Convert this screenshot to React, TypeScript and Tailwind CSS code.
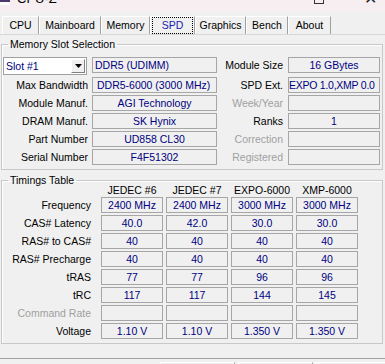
import React from "react";

const NAVY = "text-[#000080]";

function Field({
  children,
  left = false,
  w,
  extra = "",
}: {
  children?: React.ReactNode;
  left?: boolean;
  w?: string;
  extra?: string;
}) {
  return (
    <div
      className={`h-[16px] border border-[#a6a6a6] bg-[#f0f0f0] leading-[14px] whitespace-nowrap overflow-hidden ${NAVY} ${
        left ? "text-left" : "text-center"
      } ${w ?? ""} ${extra}`}
    >
      {children}
    </div>
  );
}

function Label({
  children,
  dim = false,
  pr,
}: {
  children: React.ReactNode;
  dim?: boolean;
  pr: string;
}) {
  return (
    <div
      className={`h-[16px] leading-[16px] text-right whitespace-nowrap ${pr} ${
        dim ? "text-[#a0a0a0]" : "text-black"
      }`}
    >
      {children}
    </div>
  );
}

const tabs: { name: string; w: string; sel?: boolean }[] = [
  { name: "CPU", w: "w-[37px]" },
  { name: "Mainboard", w: "w-[62px]" },
  { name: "Memory", w: "w-[49px]" },
  { name: "SPD", w: "w-[45px]", sel: true },
  { name: "Graphics", w: "w-[51px]" },
  { name: "Bench", w: "w-[42px]" },
  { name: "About", w: "w-[43px]" },
];

const slotRows: [string, string, boolean, string, string, boolean, boolean][] = [
  ["Max Bandwidth", "DDR5-6000 (3000 MHz)", true, "SPD Ext.", "EXPO 1.0,XMP 0.0", false, true],
  ["Module Manuf.", "AGI Technology", false, "Week/Year", "", true, false],
  ["DRAM Manuf.", "SK Hynix", false, "Ranks", "1", false, false],
  ["Part Number", "UD858 CL30", false, "Correction", "", true, false],
  ["Serial Number", "F4F51302", false, "Registered", "", true, false],
];

const timingRows: [string, string[], boolean][] = [
  ["Frequency", ["2400 MHz", "2400 MHz", "3000 MHz", "3000 MHz"], false],
  ["CAS# Latency", ["40.0", "42.0", "30.0", "30.0"], false],
  ["RAS# to CAS#", ["40", "40", "40", "40"], false],
  ["RAS# Precharge", ["40", "40", "40", "40"], false],
  ["tRAS", ["77", "77", "96", "96"], false],
  ["tRC", ["117", "117", "144", "145"], false],
  ["Command Rate", ["", "", "", ""], true],
  ["Voltage", ["1.10 V", "1.10 V", "1.350 V", "1.350 V"], false],
];

export default function App() {
  return (
    <div className="w-[385px] h-[364px] overflow-hidden bg-[#f0f0f0] font-['Liberation_Sans',Arial,sans-serif] text-[10.5px] text-black">
      {/* title bar (cut off at the top of the picture) */}
      <div className="h-[12px] overflow-hidden bg-[#f7eef1]">
        <div className="-mt-[9px] h-[16px] flex items-center">
          <div className="w-[10px] h-[12px] bg-[#4b3a6b] border-b-[3px] border-white" />
          <div className="ml-[7px] text-[13px] leading-[16px] text-black">CPU-Z</div>
          <div className="ml-auto mr-[40px] w-[10px] h-[10px] border border-[#333]" />
          <div className="mr-[8px] text-[16px] leading-[16px] text-[#222]">✕</div>
        </div>
      </div>

      {/* tabs */}
      <div className="h-[22px] pt-[4px] pl-[2px] flex">
        {tabs.map((t) => (
          <div
            key={t.name}
            className={`${t.w} h-[18px] flex items-center justify-center border-l border-white border-r border-r-[#a0a0a0] border-t border-t-white`}
          >
            {t.sel ? (
              <div className="w-[41px] h-[17px] border border-dotted border-black flex items-center justify-center text-[#1a1ab0]">
                {t.name}
              </div>
            ) : (
              <span>{t.name}</span>
            )}
          </div>
        ))}
      </div>

      {/* page frame */}
      <div className="h-[325px] border-t border-t-[#d8d8d8] border-b border-b-[#a0a0a0]">
        {/* Memory Slot Selection */}
        <fieldset className="mt-[3px] ml-[1px] w-[382px] border border-[#c8c8c8] pl-[1px] pt-[7px] pb-[4px] shadow-[inset_1px_1px_0_#fff]">
          <legend className="ml-[5px] px-[2px] leading-[12px]">Memory Slot Selection</legend>
          <div className="flex flex-col gap-[2px]">
            <div className="flex h-[18px] items-start">
              <div className="w-[89px]">
                <div className="w-[84px] h-[18px] bg-white border border-[#a0a0a0] flex items-center">
                  <span className={`pl-[2px] ${NAVY} leading-[16px]`}>Slot #1</span>
                  <div className="ml-auto mr-[1px] w-[14px] h-[14px] bg-[#f0f0f0] border border-t-white border-l-white border-b-[#808080] border-r-[#808080] flex items-center justify-center">
                    <svg width="7" height="4" viewBox="0 0 7 4">
                      <path d="M0 0h7L3.5 4z" fill="#000" />
                    </svg>
                  </div>
                </div>
              </div>
              <Field left w="w-[125px]" extra="pl-[2px]">
                DDR5 (UDIMM)
              </Field>
              <div className="w-[71px]">
                <Label pr="pr-[5px]">Module Size</Label>
              </div>
              <Field w="w-[92px]">16 GBytes</Field>
            </div>
            {slotRows.map(([l1, v1, left1, l2, v2, dim2, left2]) => (
              <div key={l1} className="flex h-[16px]">
                <div className="w-[89px]">
                  <Label pr="pr-[4px]">{l1}</Label>
                </div>
                <Field left={left1} w="w-[125px]" extra={left1 ? "pl-[4px]" : ""}>
                  {v1}
                </Field>
                <div className="w-[71px]">
                  <Label pr="pr-[5px]" dim={dim2}>
                    {l2}
                  </Label>
                </div>
                <Field
                  left={left2}
                  w="w-[92px]"
                  extra={left2 ? "pl-0 tracking-[-0.25px]" : ""}
                >
                  {v2}
                </Field>
              </div>
            ))}
          </div>
        </fieldset>

        {/* Timings Table */}
        <fieldset className="mt-[4px] ml-[1px] w-[382px] border border-[#c8c8c8] pl-[1px] pb-[4px] shadow-[inset_1px_1px_0_#fff]">
          <legend className="ml-[5px] px-[2px] leading-[12px]">Timings Table</legend>
          <div className="grid grid-cols-[95px_62px_62px_62px_62px] gap-x-[3px] gap-y-[2px]">
            <div className="h-[9px]" />
            {["JEDEC #6", "JEDEC #7", "EXPO-6000", "XMP-6000"].map((h) => (
              <div key={h} className="h-[9px] leading-[8px] text-center whitespace-nowrap">
                {h}
              </div>
            ))}
            {timingRows.map(([label, vals, dim]) => (
              <React.Fragment key={label}>
                <Label pr="pr-[7px]" dim={dim}>
                  {label}
                </Label>
                {vals.map((v, i) => (
                  <Field key={i}>{v}</Field>
                ))}
              </React.Fragment>
            ))}
          </div>
        </fieldset>
      </div>

      {/* bottom buttons (cut off) */}
      <div className="flex mt-[3px] pl-[160px]">
        <div className="w-[75px] h-[6px] border-t border-l border-white border-r border-r-[#a0a0a0]" />
        <div className="ml-[3px] w-[75px] h-[6px] border-t border-l border-white border-r border-r-[#a0a0a0]" />
        <div className="ml-[2px] flex-1 h-[6px] border-t border-l border-white" />
      </div>
    </div>
  );
}
